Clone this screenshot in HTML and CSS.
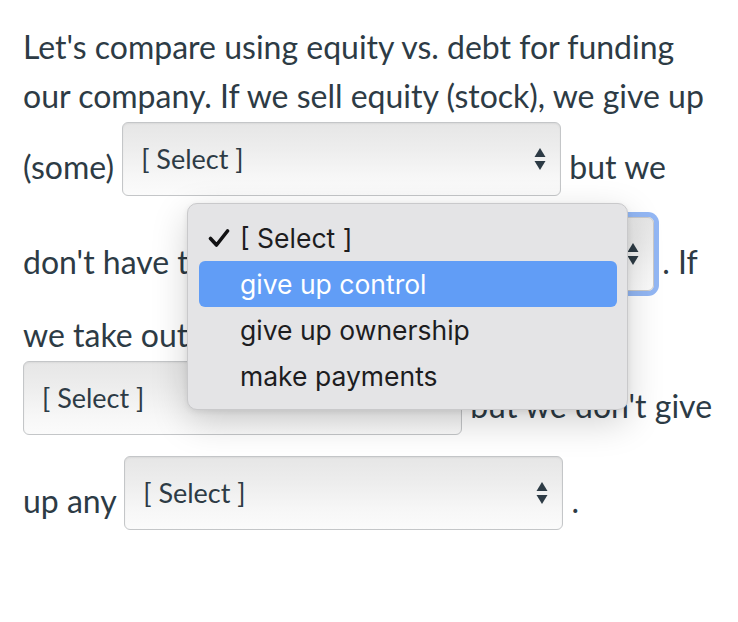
FILE: index.html
```html
<!DOCTYPE html>
<html lang="en">
<head>
<meta charset="utf-8">
<title>Equity vs. debt</title>
<link rel="stylesheet" href="styles.css">
</head>
<body>
<main class="page">
  <p class="question">Let's compare using equity vs. debt for funding our company. If we sell equity (stock), we give up (some) <span class="select"><span class="select-inner"><span class="select-value">[ Select ]</span><svg class="select-arrows" viewBox="0 0 12 24" width="12" height="24"><path d="M6 1 L11.5 10 L0.5 10 Z"/><path d="M0.5 14 L11.5 14 L6 23 Z"/></svg></span></span> but we don't have to <span class="select is-focused"><span class="select-inner"><span class="select-value">[ Select ]</span><svg class="select-arrows" viewBox="0 0 12 24" width="12" height="24"><path d="M6 1 L11.5 10 L0.5 10 Z"/><path d="M0.5 14 L11.5 14 L6 23 Z"/></svg></span></span> . If we take out debt, we <span class="select"><span class="select-inner"><span class="select-value">[ Select ]</span><svg class="select-arrows" viewBox="0 0 12 24" width="12" height="24"><path d="M6 1 L11.5 10 L0.5 10 Z"/><path d="M0.5 14 L11.5 14 L6 23 Z"/></svg></span></span> but we don't give up any <span class="select"><span class="select-inner"><span class="select-value">[ Select ]</span><svg class="select-arrows" viewBox="0 0 12 24" width="12" height="24"><path d="M6 1 L11.5 10 L0.5 10 Z"/><path d="M0.5 14 L11.5 14 L6 23 Z"/></svg></span></span> .</p>

  <ul class="menu" role="listbox">
    <li class="menu-item is-checked"><span class="menu-check"><svg viewBox="0 0 22 18" width="22" height="18"><path d="M2.5 9.5 L8.5 16 L19.5 2"/></svg></span>[ Select ]</li>
    <li class="menu-item is-active"><span class="menu-check"></span>give up control</li>
    <li class="menu-item"><span class="menu-check"></span>give up ownership</li>
    <li class="menu-item"><span class="menu-check"></span>make payments</li>
  </ul>
</main>
</body>
</html>
```

FILE: styles.css
```css
html, body {
  margin: 0;
  padding: 0;
  background: #ffffff;
}

.page {
  position: relative;
  width: 738px;
  height: 622px;
  box-sizing: border-box;
  padding: 22px 0 0 23px;
}

.question {
  margin: 0;
  width: 700px;
  font-family: "Lato", "Liberation Sans", sans-serif;
  font-size: 32px;
  line-height: 49px;
  color: #2d3b45;
}

.select {
  display: inline-block;
  overflow: hidden;
  vertical-align: -36px;
  box-sizing: border-box;
  width: 439px;
  height: 74px;
  margin-top: 2px;
  margin-bottom: 19px;
  border: 1px solid #c4c6c8;
  border-radius: 6px;
  background: linear-gradient(to bottom, #e6e6e6 0%, #ededed 35%, #f7f7f7 75%, #fbfbfb 100%);
  box-shadow: inset 0 1px 2px rgba(0, 0, 0, 0.06);
  font-size: 27px;
}

.select.is-focused {
  box-shadow: 0 0 0 5px #93b7f4;
  border-color: #c9c9c9;
}

.select-inner {
  display: flex;
  align-items: center;
  justify-content: space-between;
  height: 72px;
  padding: 0 14px 0 18px;
  line-height: 34px;
}

.select-value {
  color: #2d3b45;
  white-space: nowrap;
}

.select-arrows {
  display: block;
  fill: #2d3b45;
}

.menu {
  position: absolute;
  left: 187px;
  top: 203px;
  width: 441px;
  box-sizing: border-box;
  margin: 0;
  padding: 11px 10px 10px 11px;
  list-style: none;
  background: #e4e4e6;
  border: 1px solid #c9c9cb;
  border-radius: 10px;
  box-shadow: 0 12px 36px rgba(0, 0, 0, 0.18), 0 2px 6px rgba(0, 0, 0, 0.08);
  font-family: "Inter", "Noto Sans", sans-serif;
  font-size: 26.5px;
  color: #1d1d1f;
}

.menu-item {
  display: flex;
  align-items: center;
  height: 46px;
  border-radius: 6px;
  white-space: nowrap;
}

.menu-item.is-active {
  background: #619df6;
  color: #ffffff;
}

.menu-check {
  display: flex;
  align-items: center;
  width: 41px;
  flex: none;
  padding-left: 9px;
  box-sizing: border-box;
}

.menu-check svg {
  display: block;
  fill: none;
  stroke: #111113;
  stroke-width: 3.6;
  stroke-linecap: round;
  stroke-linejoin: round;
}
```
